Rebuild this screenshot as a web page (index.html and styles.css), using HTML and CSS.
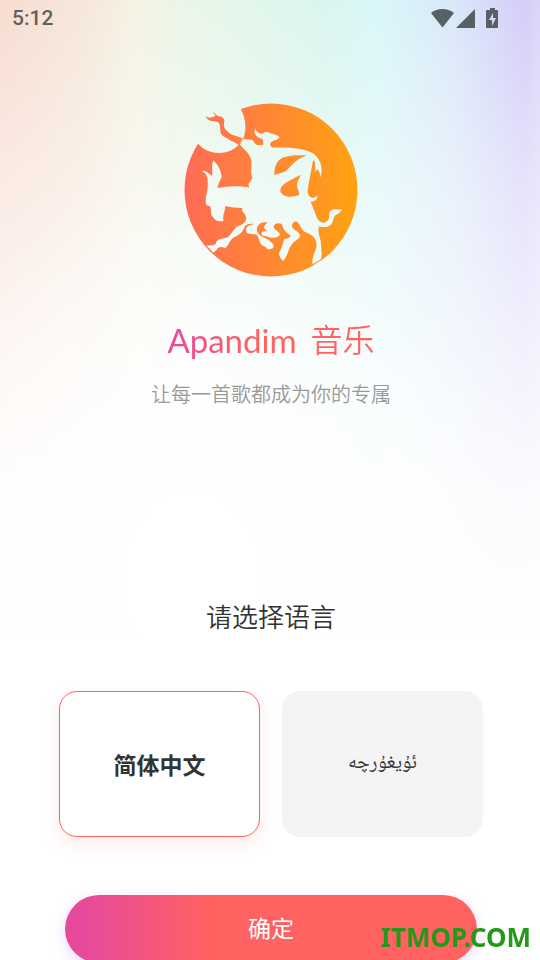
FILE: index.html
```html
<!DOCTYPE html>
<html lang="zh-CN">
<head>
<meta charset="utf-8">
<meta name="viewport" content="width=device-width, initial-scale=1">
<title>Apandim 音乐</title>
<link rel="stylesheet" href="styles.css">
</head>
<body>
<div class="screen">
  <header class="status">
    <time class="clock">5:12</time>
    <svg class="status-icons" viewBox="430 6 70 22" aria-hidden="true">
      <path d="M431 12C437 6.700 447.500 6.700 454 12L442.500 26.500Z"/>
      <path d="M456 27L475 8V27Z"/>
      <path fill-rule="evenodd" d="M488 9h2V7h5v2h2q1 0 1 1v16q0 1-1 1h-10q-1 0-1-1V10q0-1 1-1zM493 12l-4 7h3v6l4-8h-3z"/>
    </svg>
  </header>
  <main class="content">
    <svg class="logo" viewBox="184 103 174 174" role="img" aria-label="Apandim">
      <defs>
        <linearGradient id="orange" x1="0" y1="0" x2="1" y2="0">
          <stop offset="0" stop-color="#ff6b57"/>
          <stop offset="1" stop-color="#ffa310"/>
        </linearGradient>
        <mask id="rider" maskUnits="userSpaceOnUse" x="184" y="103" width="174" height="174">
          <circle cx="271" cy="190" r="86.500" fill="#fff"/>
          <path fill="#000" d="M184 103H239L241 109.500C246 119 247 130 243 139.500L239.500 144C229 156 209 156 198.300 144L184 150Z"/>
          <path fill="#000" d="M240 144.500L244 139C247 140 249 139 252 140C254 141 254 143 257 145H263Q264 141 262 138.500C258 138 254.500 135 254.500 131L255 128C256 132 260 134 263 133.500Q265 131 269 132.500C272 134 276 134 279.500 137C278 140 274 140 271.500 142C269 144 270 147 273 147.500C290 147 305 148 314 154C321 160 323 168 320.700 177.500C320 173 319 171 317.500 169L315.500 172L315 162L313 160C312 168 309 180 307.700 190C307 198 314 200 317 195.500C318 200 314 202 310.500 201.500C313 207 315 213 317 218C320 224 326 224 328.700 219C330 215 328 213 331 210.500C334 208 338 210 342 209.300C340 215 335 213 333.500 219C332 227 326 228 319 226.500C317 233 321 238 321 244C321 250 323 256 319.700 262L312.500 265C312 259 313 256 316 249C318 241 315 236 306 232.500C301 230 301 226 298 222.500C295 220 292 223 292 226.500C293 230 300 232 300 235.500C300 239 295 240 292 244C288 249 288 256 283 261C281 259 279 256 279 253C281 249 283 245 284 239C287 239 289 238 291 236C287 233 283 230 282 224C276 222 273 225 274 228C276 231 280 232 280 235C276 239 271 238 267 236.500C264 236 261 236 261.500 233C263 230 265 232 268 231C263 230 263 225 268 222.500C260 221 256 226 257 231C259 237 267 238 270 241C272 243 275 245 273 248Q270 250 267 249C267 246 263 247 261 244C259 241 259 238 257 235C253 233 246 236 246 230C246 226 250 225 254 224Q248 223 245 226C243 232 239 235 233 238C229 241 228 247 225 248C220 246 218 247 216.500 250L213.300 252.700L206.700 245.700C211 245 215 246 216 243C217 238 224 239 228 237C233 233 234 226 241 225C247 222 248 217 243 212C241 210 243 208 242 208Q233 208 225 206C226 211 222 214 223.500 221C219 222 215 221 213 217C210 215 212 211 210 206C204 206 206 200 206 196C208 191 208 183 207.500 178Q206 173 202 171C206 170 209 174 212 176C213 170 211 165 213.500 160.500C219 166 221 171 221.700 177C220 181 218 184 217.500 188Q232 185 247 187L249 188L248.500 184L252.500 178C250 172 252 166 251.500 161C250 153 244 150 240 144.500Z"/>
          <path fill="#fff" d="M274.300 175.500C274 167 277 160 283 157.500C291 155 300 155 307 155.700C297 158 292 165 286 171C281 174 277 173 274.300 175.500ZM300.700 175C297 183 296 184 298 190Q300 193 298.500 195.500C294 196 290 198 284 195.500C277 191 281 186 287 182C292 179 296 177 300.700 175Z"/>
          <path fill="#fff" d="M205.700 116C209 119 213 117 215.300 116C216 114 213 114 213.300 112.300C216 113 216 117 221 116.500C224 118 225 120 224 123.500C223 128 227 131 230 133.500C234 136 238 136 242.700 138.500L238.700 145C233 141 227 139 223 136C219 133 221 128 219.500 124C218 119 208 124 205.700 116Z"/>
        </mask>
      </defs>
      <rect x="184" y="103" width="174" height="174" fill="url(#orange)" mask="url(#rider)"/>
      <path d="M206 246L214 254" stroke="#ff744e" fill="none"/>
      <path d="M312 265L322 259" stroke="#ff9620" fill="none"/>
    </svg>
    <h1 class="title"><span>Apandim</span> <span>音乐</span></h1>
    <p class="tagline">让每一首歌都成为你的专属</p>
    <form class="chooser">
      <h2 class="prompt" id="prompt">请选择语言</h2>
      <div class="options" role="radiogroup" aria-labelledby="prompt">
        <label class="option"><input type="radio" name="lang" value="zh" checked><span>简体中文</span></label>
        <label class="option" lang="ug"><input type="radio" name="lang" value="ug"><span dir="rtl">ئۇيغۇرچە</span></label>
      </div>
      <button class="confirm" type="button">确定</button>
    </form>
  </main>
  <div class="watermark">ITMOP.COM</div>
</div>
</body>
</html>
```
FILE: styles.css
```css
* { box-sizing: border-box; }
html { scrollbar-width: none; }
body {
  margin: 0;
  background: #fff;
  color: #333;
  font-family: Lato, "Noto Sans CJK SC", sans-serif;
}
.screen {
  min-height: 100vh;
  background:
    radial-gradient(ellipse 60% 400px at 35% 580px, #fff 20%, rgba(255, 255, 255, 0) 100%),
    linear-gradient(to bottom, rgba(255, 255, 255, 0) 0, rgba(255, 255, 255, .45) 200px, rgba(255, 255, 255, .7) 350px, rgba(255, 255, 255, .9) 480px, #fff 640px),
    linear-gradient(to right, #f8dcd1 0, #f6e7da 15%, #f4f3e4 25%, #e6f7ea 40%, #dbf5ee 60%, #d9f7f8 70%, #dae8f8 84%, #d4cef8 97%, #dbd5f9 100%);
}
.status {
  display: flex;
  align-items: center;
  justify-content: space-between;
  height: 36px;
  padding: 0 40px 0 12px;
  color: #5f625c;
}
.clock { font: 500 21px/38px Roboto, sans-serif; }
.status-icons { width: 70px; height: 22px; fill: #566163; }
.content {
  display: flex;
  flex-direction: column;
  align-items: center;
  padding: 67px 0 0 2px;
}
.logo { display: block; width: 174px; height: 174px; }
.title {
  display: flex;
  gap: 14px;
  margin: 39px 0 0;
  font-size: 33px;
  font-weight: 400;
  line-height: 48px;
  background: linear-gradient(to right, #e84a9b, #ff6260 45%);
  background-clip: text;
  color: transparent;
}
.title span + span {
  font-size: 32px;
  font-weight: 350;
}
.tagline {
  margin: 15px 0 0;
  color: #999;
  font-size: 20px;
  font-weight: 350;
  line-height: 30px;
}
.chooser {
  width: 100%;
  margin-top: 188px;
  padding: 0 57px;
}
.prompt {
  margin: 0;
  font-size: 26px;
  font-weight: 350;
  line-height: 40px;
  text-align: center;
}
.options {
  display: grid;
  grid-template-columns: 1fr 1fr;
  gap: 22px;
  margin-top: 54px;
}
.option {
  display: flex;
  align-items: center;
  justify-content: center;
  height: 146px;
  border: 1px solid #f4f4f4;
  border-radius: 18px;
  background: #f4f4f4;
  font-size: 23px;
}
.option:has(input:checked) {
  border-color: #ff6260;
  background: #fff;
  font-weight: 700;
  box-shadow: 0 6px 18px rgba(255, 98, 96, .15);
}
.option:lang(ug) {
  font-family: "Noto Naskh Arabic", "Noto Sans Arabic", "DejaVu Sans", serif;
  font-size: 20px;
}
.option input {
  position: absolute;
  opacity: 0;
}
.confirm {
  display: block;
  width: calc(100% - 12px);
  height: 68px;
  margin: 58px auto 0;
  padding: 0 0 4px;
  border: 0;
  border-radius: 34px;
  background: linear-gradient(to right, #e84a9b 5%, #ff6260 35%);
  box-shadow: 0 4px 14px rgba(180, 90, 255, .25);
  color: #fff;
  font: 400 23px/34px "Noto Sans CJK SC", sans-serif;
}
.watermark {
  position: fixed;
  right: 9px;
  bottom: 6px;
  color: #229a18;
  font: 700 26px/34px "Noto Sans", sans-serif;
}
```
